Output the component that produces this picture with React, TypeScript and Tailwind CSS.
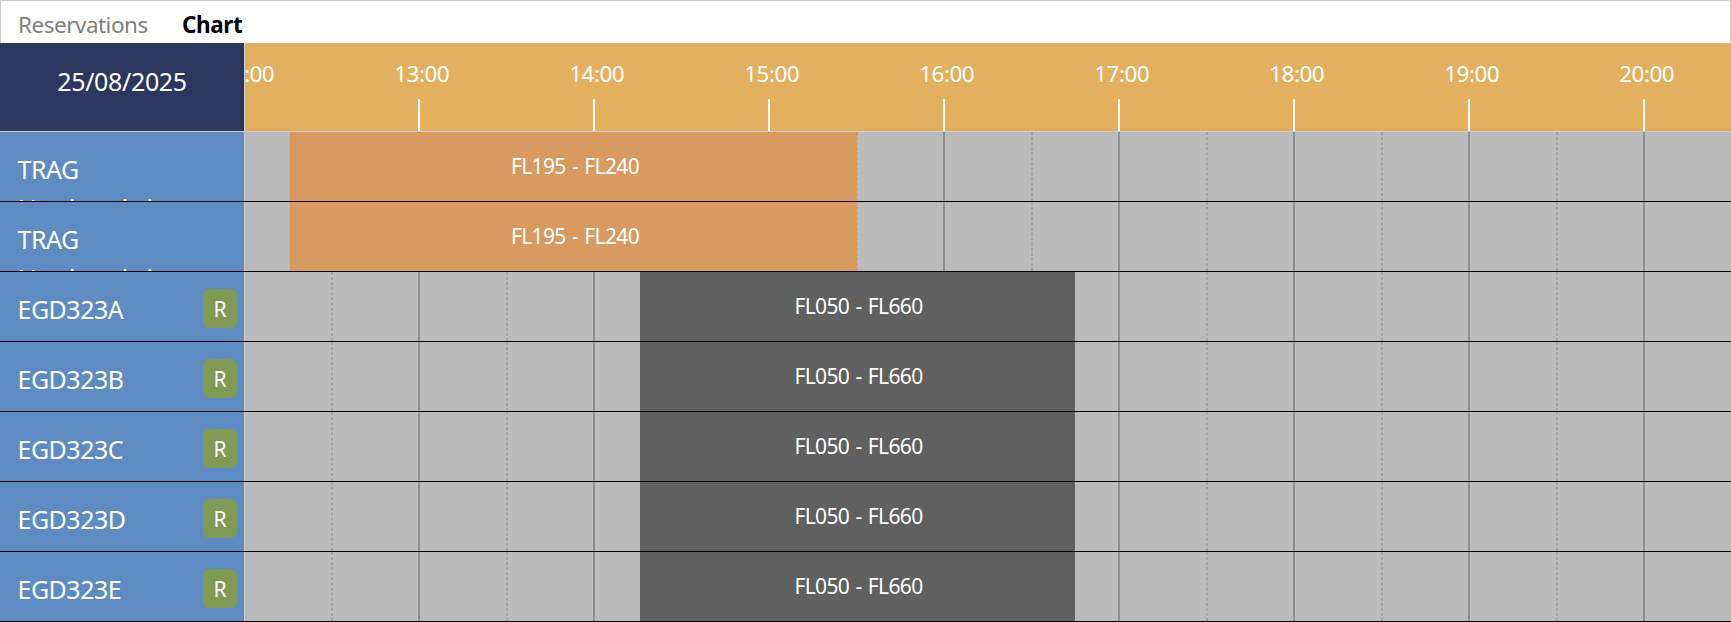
const hours = ["12:00", "13:00", "14:00", "15:00", "16:00", "17:00", "18:00", "19:00", "20:00"];

type Row = { name: string; r: boolean; level: string };

const rows: Row[] = [
  { name: "TRAG Northumbria", r: false, level: "FL195 - FL240" },
  { name: "TRAG Northumbria", r: false, level: "FL195 - FL240" },
  { name: "EGD323A", r: true, level: "FL050 - FL660" },
  { name: "EGD323B", r: true, level: "FL050 - FL660" },
  { name: "EGD323C", r: true, level: "FL050 - FL660" },
  { name: "EGD323D", r: true, level: "FL050 - FL660" },
  { name: "EGD323E", r: true, level: "FL050 - FL660" },
];

function Grid() {
  return (
    <svg className="absolute inset-0 h-full w-full" aria-hidden="true">
      {hours.slice(1).map((h, i) => (
        <g key={h}>
          <line x1={87 + i * 175} x2={87 + i * 175} y1="0" y2="69" stroke="#a3a3a3" strokeWidth="2" strokeDasharray="3 2.077" />
          <line x1={174 + i * 175} x2={174 + i * 175} y1="0" y2="69" stroke="#8d8d8d" strokeWidth="2" />
        </g>
      ))}
    </svg>
  );
}

function Lane({ row }: { row: Row }) {
  return (
    <div className="flex h-[70px] border-b border-black">
      <div className="flex w-[244px] shrink-0 overflow-hidden bg-[#5e8bc1] pl-[17.5px] pr-[7px] text-[25px] text-white">
        <span className="w-40 pt-[18px] leading-[39px] tracking-[-0.5px]">{row.name}</span>
        {row.r && (
          <span className="ml-auto mt-[17px] flex h-[39px] w-[34px] items-center justify-center rounded-md bg-[#7f9a54] pt-[2px] text-[21px]">
            R
          </span>
        )}
      </div>
      <div className="relative flex-1 overflow-hidden border-l border-[#cbcbcb] bg-[#bbbbbb]">
        <Grid />
        <div
          className={
            row.r
              ? "relative ml-[395px] h-full w-[435px] bg-[#606060] pl-[2px] pt-[19px] text-center text-[21px] leading-[30px] tracking-[-0.65px] text-white [word-spacing:1.5px]"
              : "relative ml-[45px] h-full w-[567px] bg-[#d89a5f] pl-[3px] pt-[19px] text-center text-[21px] leading-[30px] tracking-[-0.65px] text-white [word-spacing:1.5px]"
          }
        >
          {row.level}
        </div>
      </div>
    </div>
  );
}

export default function App() {
  return (
    <div className="flex h-[622px] w-full flex-col overflow-hidden bg-white font-['Noto_Sans',sans-serif]">
      <div className="flex h-[43px] shrink-0 border-x border-t border-[#cccccc] pl-[17px] pt-2 text-[22.5px] leading-[32px]">
        <span className="w-[164px] tracking-[-0.5px] text-[#808080]">Reservations</span>
        <span className="font-bold tracking-[-0.4px] text-black">Chart</span>
      </div>
      <div className="flex h-[89px] shrink-0 border-b border-[#cccccc]">
        <div className="flex w-[244px] shrink-0 items-center justify-center bg-[#2c3760] pb-[11px] text-[25px] tracking-[-0.35px] text-white">
          25/08/2025
        </div>
        <div className="flex flex-1 overflow-hidden border-l border-[#cccccc] bg-[#e3b05f]">
          <div className="-ml-[88.5px] flex">
            {hours.map((h) => (
              <div key={h} className="flex w-[175px] shrink-0 flex-col items-center text-[22.5px] leading-[32px] tracking-[-0.5px] text-white">
                <span className="ml-[5.5px] mt-[15px] h-[41px]">{h}</span>
                <span className="h-8 w-[2px] bg-white" />
              </div>
            ))}
          </div>
        </div>
      </div>
      {rows.map((row, i) => (
        <Lane key={i} row={row} />
      ))}
    </div>
  );
}
